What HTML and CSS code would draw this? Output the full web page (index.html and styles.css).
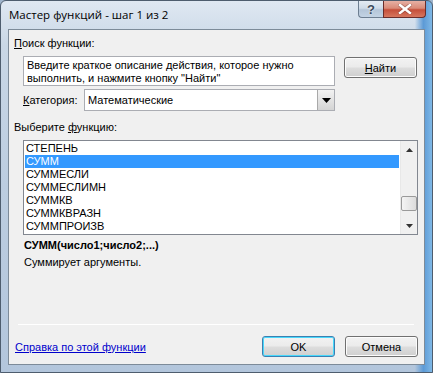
FILE: index.html
```html
<!DOCTYPE html>
<html lang="ru">
<head>
  <meta charset="UTF-8">
  <title>Мастер функций - шаг 1 из 2</title>
  <link rel="stylesheet" href="styles.css">
</head>
<body>
  <div class="window">
    <!-- Заголовок окна -->
    <div class="titlebar">
      <span class="title">Мастер функций - шаг 1 из 2</span>
      <div class="caption-buttons">
        <div class="cap-btn help">?</div>
        <div class="cap-btn close">
          <svg width="14" height="10" viewBox="0 0 14 10">
            <path d="M2 1 L12 9 M12 1 L2 9" stroke="#5a2420" stroke-width="4" stroke-linecap="square" opacity="0.35"/>
            <path d="M2 1 L12 9 M12 1 L2 9" stroke="#fff" stroke-width="2.4" stroke-linecap="square"/>
          </svg>
        </div>
      </div>
    </div>

    <div class="client">
      <div class="label"><u>П</u>оиск функции:</div>

      <div class="search-row">
        <div class="search-box">Введите краткое описание действия, которое нужно выполнить, и нажмите кнопку "Найти"</div>
        <button class="btn"><u>Н</u>айти</button>
      </div>

      <div class="category-row">
        <span class="cat-label"><u>К</u>атегория:</span>
        <div class="combo">
          <span class="combo-value">Математические</span>
          <span class="combo-arrow">
            <svg width="9" height="5" viewBox="0 0 9 5"><path d="M0 0 H9 L4.5 5 Z" fill="#000"/></svg>
          </span>
        </div>
      </div>

      <div class="label">Выберите <u>ф</u>ункцию:</div>

      <div class="listbox">
        <ul class="items">
          <li>СТЕПЕНЬ</li>
          <li class="selected">СУММ</li>
          <li>СУММЕСЛИ</li>
          <li>СУММЕСЛИМН</li>
          <li>СУММКВ</li>
          <li>СУММКВРАЗН</li>
          <li>СУММПРОИЗВ</li>
        </ul>
        <div class="scrollbar">
          <div class="arrow up"><svg width="7" height="4" viewBox="0 0 7 4"><path d="M0 4 H7 L3.5 0 Z" fill="#333"/></svg></div>
          <div class="track">
            <div class="thumb"></div>
          </div>
          <div class="arrow down"><svg width="7" height="4" viewBox="0 0 7 4"><path d="M0 0 H7 L3.5 4 Z" fill="#333"/></svg></div>
        </div>
      </div>

      <div class="syntax">СУММ(число1;число2;...)</div>
      <div class="description">Суммирует аргументы.</div>

      <div class="spacer"></div>
      <div class="separator"></div>

      <div class="footer">
        <a class="help-link" href="#">Справка по этой функции</a>
        <div class="footer-buttons">
          <button class="btn default">OK</button>
          <button class="btn">Отмена</button>
        </div>
      </div>
    </div>
  </div>
</body>
</html>
```

FILE: styles.css
```css
/* Базовые стили */
* {
  margin: 0;
  padding: 0;
  box-sizing: border-box;
}

body {
  width: 433px;
  height: 373px;
  overflow: hidden;
  font-family: "Liberation Sans", Arial, sans-serif;
  font-size: 11px;
  color: #000;
  background: #9fb4cc;
}

/* Рамка окна в стиле Aero */
.window {
  width: 433px;
  height: 373px;
  display: flex;
  flex-direction: column;
  padding: 0 7px 7px 7px;
  border: 1px solid #4e5d6e;
  border-radius: 6px 6px 0 0;
  background:
    linear-gradient(to right, rgba(255,255,255,0) 96%, #5c9ad6 98%, #7fb8e6 100%),
    linear-gradient(to bottom, #dfe8f2 0%, #c9d7e6 12%, #bccde0 50%, #b3c6dc 100%);
}

.titlebar {
  height: 28px;
  display: flex;
  align-items: flex-start;
  justify-content: space-between;
  flex-shrink: 0;
}

.title {
  font-family: "Open Sans", "Noto Sans", sans-serif;
  font-size: 11.5px;
  color: #000;
  margin-top: 6px;
  margin-left: 1px;
}

.caption-buttons {
  display: flex;
  margin-right: -1px;
}

.cap-btn {
  height: 17px;
  display: flex;
  align-items: center;
  justify-content: center;
  border: 1px solid #6d7e91;
  border-top: none;
}

.cap-btn.help {
  width: 25px;
  border-radius: 0 0 0 4px;
  border-right: none;
  background: linear-gradient(to bottom, #e4ebf3 0%, #cfdbe8 45%, #b4c5d8 55%, #c3d3e4 100%);
  color: #3c4a5a;
  font-family: "Liberation Sans", sans-serif;
  font-size: 13px;
  font-weight: bold;
  text-shadow: 0 0 2px #fff;
}

.cap-btn.close {
  width: 43px;
  border-radius: 0 0 4px 0;
  border-color: #6a2d2a;
  background: linear-gradient(to bottom, #e6b0a4 0%, #d98a78 45%, #c54f3a 55%, #d7765e 100%);
}

/* Клиентская область */
.client {
  flex: 1;
  display: flex;
  flex-direction: column;
  background: #f0f0f0;
  border: 1px solid #7d8b99;
  padding: 7px 6px 7px 5px;
}

.label {
  line-height: 13px;
  height: 13px;
}

.search-row {
  display: flex;
  align-items: flex-start;
  margin-top: 6px;
  margin-left: 9px;
}

.search-box {
  width: 312px;
  height: 30px;
  background: #fff;
  border: 1px solid #abadb3;
  padding: 2px 3px;
  line-height: 13px;
}

.btn {
  width: 73px;
  height: 21px;
  font-family: "Liberation Sans", Arial, sans-serif;
  font-size: 11px;
  color: #000;
  border: 1px solid #707070;
  border-radius: 3px;
  background: linear-gradient(to bottom, #f2f2f2 0%, #ebebeb 48%, #dddddd 52%, #cfcfcf 100%);
  box-shadow: inset 0 0 0 1px #fcfcfc;
}

.search-row .btn {
  margin-left: 9px;
  margin-top: 1px;
}

.category-row {
  display: flex;
  align-items: center;
  margin-top: 3px;
  margin-left: 9px;
}

.cat-label {
  width: 61px;
}

.combo {
  width: 251px;
  height: 22px;
  display: flex;
  align-items: center;
  background: #fff;
  border: 1px solid #abadb3;
}

.combo-value {
  flex: 1;
  padding-left: 3px;
}

.combo-arrow {
  width: 17px;
  height: 20px;
  display: flex;
  align-items: center;
  justify-content: center;
  border-left: 1px solid #a9a9a9;
  background: linear-gradient(to bottom, #f2f2f2, #d4d4d4);
}

.category-row + .label {
  margin-top: 10px;
}

/* Список функций */
.listbox {
  display: flex;
  margin-top: 6px;
  margin-left: 9px;
  height: 95px;
  background: #fff;
  border: 1px solid #828790;
}

.items {
  list-style: none;
  flex: 1;
  padding: 1px 1px 0 1px;
}

.items li {
  height: 13px;
  line-height: 13px;
  padding-left: 1px;
}

.items li.selected {
  background: #3399ff;
  color: #fff;
}

.scrollbar {
  width: 17px;
  display: flex;
  flex-direction: column;
  background: #f0f0f0;
  border-left: 1px solid #e8e8e8;
}

.arrow {
  height: 17px;
  display: flex;
  align-items: center;
  justify-content: center;
}

.track {
  flex: 1;
  position: relative;
}

.thumb {
  position: absolute;
  left: 0;
  right: 0;
  top: 38px;
  height: 15px;
  border: 1px solid #9a9a9a;
  border-radius: 2px;
  background: linear-gradient(to right, #f4f4f4, #dcdcdc);
}

.syntax {
  font-weight: bold;
  margin-top: 4px;
  margin-left: 10px;
  line-height: 13px;
}

.description {
  margin-top: 4px;
  margin-left: 10px;
  line-height: 13px;
}

.spacer {
  flex: 1;
}

.separator {
  height: 1px;
  background: #dfdfdf;
  border-bottom: 1px solid #fff;
  margin-left: 4px;
  margin-right: 4px;
}

.footer {
  display: flex;
  align-items: center;
  justify-content: space-between;
  margin-top: 11px;
}

.help-link {
  color: #0000cc;
  text-decoration: underline;
  margin-left: 1px;
}

.footer-buttons {
  display: flex;
  gap: 10px;
}

.btn.default {
  border-color: #3c7fb1;
  box-shadow: inset 0 0 0 1px #48d8fb;
}
```
